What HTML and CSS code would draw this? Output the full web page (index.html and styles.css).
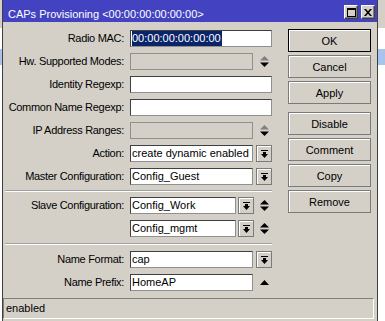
FILE: index.html
```html
<!DOCTYPE html>
<html>
<head>
<meta charset="utf-8">
<link rel="stylesheet" href="styles.css">
</head>
<body>
<div class="window">
  <div class="titlebar">
    <span class="title">CAPs Provisioning &lt;00:00:00:00:00:00&gt;</span>
    <div class="tbtns">
      <span class="tbtn"><svg width="9" height="9" viewBox="0 0 9 9"><path d="M0 0h9v9h-9z M1 2v6h7v-6z" fill="#000" fill-rule="evenodd"/></svg></span>
      <span class="tbtn"><svg width="8" height="7" viewBox="0 0 8 7"><path d="M0 0h2l2 2.2l2-2.2h2l-3 3.5l3 3.5h-2l-2-2.2l-2 2.2h-2l3-3.5z" fill="#000"/></svg></span>
    </div>
  </div>
  <div class="content">
    <div class="form">
      <div class="row"><span class="lbl">Radio MAC:</span><div class="field"><span class="inp w142"><span class="sel">00:00:00:00:00:00</span></span></div></div>
      <div class="row"><span class="lbl">Hw. Supported Modes:</span><div class="field"><span class="inp w123 dis"></span><svg class="spin" width="9" height="11" viewBox="0 0 9 11"><path d="M0 4.5L4.5 0L9 4.5z" fill="#808080"/><path d="M0 6.5L4.5 11L9 6.5z" fill="#000"/></svg></div></div>
      <div class="row"><span class="lbl">Identity Regexp:</span><div class="field"><span class="inp w142"></span></div></div>
      <div class="row"><span class="lbl">Common Name Regexp:</span><div class="field"><span class="inp w142"></span></div></div>
      <div class="row"><span class="lbl">IP Address Ranges:</span><div class="field"><span class="inp w123 dis"></span><svg class="spin" width="9" height="11" viewBox="0 0 9 11"><path d="M0 4.5L4.5 0L9 4.5z" fill="#808080"/><path d="M0 6.5L4.5 11L9 6.5z" fill="#000"/></svg></div></div>
      <div class="row"><span class="lbl">Action:</span><div class="field"><span class="inp w123">create dynamic enabled</span><span class="dd"><svg width="7" height="8" viewBox="0 0 7 8"><path d="M0 0h7v1h-7z M2 2h3v2h2l-3.5 4l-3.5-4h2z" fill="#000"/></svg></span></div></div>
      <div class="row"><span class="lbl">Master Configuration:</span><div class="field"><span class="inp w123">Config_Guest</span><span class="dd"><svg width="7" height="8" viewBox="0 0 7 8"><path d="M0 0h7v1h-7z M2 2h3v2h2l-3.5 4l-3.5-4h2z" fill="#000"/></svg></span></div></div>
      <div class="sep"></div>
      <div class="row"><span class="lbl">Slave Configuration:</span><div class="field"><span class="inp w106">Config_Work</span><span class="dd dd-s"><svg width="7" height="8" viewBox="0 0 7 8"><path d="M0 0h7v1h-7z M2 2h3v2h2l-3.5 4l-3.5-4h2z" fill="#000"/></svg></span><svg class="spin spin-s" width="9" height="11" viewBox="0 0 9 11"><path d="M0 4.5L4.5 0L9 4.5z" fill="#000"/><path d="M0 6.5L4.5 11L9 6.5z" fill="#000"/></svg></div></div>
      <div class="row"><span class="lbl"></span><div class="field"><span class="inp w106">Config_mgmt</span><span class="dd dd-s"><svg width="7" height="8" viewBox="0 0 7 8"><path d="M0 0h7v1h-7z M2 2h3v2h2l-3.5 4l-3.5-4h2z" fill="#000"/></svg></span><svg class="spin spin-s" width="9" height="11" viewBox="0 0 9 11"><path d="M0 4.5L4.5 0L9 4.5z" fill="#000"/><path d="M0 6.5L4.5 11L9 6.5z" fill="#000"/></svg></div></div>
      <div class="sep sep2"></div>
      <div class="row"><span class="lbl">Name Format:</span><div class="field"><span class="inp w123">cap</span><span class="dd"><svg width="7" height="8" viewBox="0 0 7 8"><path d="M0 0h7v1h-7z M2 2h3v2h2l-3.5 4l-3.5-4h2z" fill="#000"/></svg></span></div></div>
      <div class="row"><span class="lbl">Name Prefix:</span><div class="field"><span class="inp w123">HomeAP</span><svg class="spin up" width="9" height="5" viewBox="0 0 9 5"><path d="M0 5L4.5 0L9 5z" fill="#000"/></svg></div></div>
    </div>
    <div class="buttons">
      <span class="btn default">OK</span>
      <span class="btn">Cancel</span>
      <span class="btn">Apply</span>
      <span class="btn group">Disable</span>
      <span class="btn">Comment</span>
      <span class="btn">Copy</span>
      <span class="btn">Remove</span>
    </div>
  </div>
  <div class="status">enabled</div>
</div>
</body>
</html>
```

FILE: styles.css
```css
html, body {
  margin: 0;
  padding: 0;
}
body {
  width: 385px;
  height: 321px;
  overflow: hidden;
  font-family: "Liberation Sans", Arial, sans-serif;
  font-size: 11px;
  color: #000;
  background: linear-gradient(to bottom, #d4d0c8 0, #d4d0c8 28px, #ffffff 28px, #ffffff 49px, #a8c4ec 49px, #a8c4ec 65px, #ffffff 65px);
}
.window {
  margin-left: 2px;
  width: 374px;
  height: 321px;
  border-left: 1px solid #404040;
  border-right: 1px solid #404040;
  background: #d4d0c8;
  display: flex;
  flex-direction: column;
}
.titlebar {
  height: 22px;
  flex: none;
  background: #4343c2;
  color: #fff;
  display: flex;
  align-items: flex-start;
  padding: 0 2px 0 5px;
}
.title {
  padding-top: 8px;
  line-height: 13px;
  white-space: nowrap;
}
.tbtns {
  margin-left: auto;
  margin-top: 5px;
  display: flex;
  gap: 3px;
}
.tbtn {
  width: 14px;
  height: 14px;
  box-sizing: border-box;
  background: #d4d0c8;
  border: 1px solid;
  border-color: #fff #404040 #404040 #fff;
  box-shadow: inset -1px -1px 0 #808080;
  display: flex;
  align-items: center;
  justify-content: center;
}
.content {
  display: flex;
  flex: none;
  padding-top: 8px;
}
.form {
  width: 285px;
  display: flex;
  flex-direction: column;
  gap: 6px;
}
.row {
  display: grid;
  grid-template-columns: 121px auto;
  column-gap: 6px;
  height: 17px;
}
.lbl {
  text-align: right;
  line-height: 17px;
  white-space: nowrap;
  letter-spacing: -0.3px;
}
.field {
  display: flex;
  align-items: center;
}
.inp {
  height: 17px;
  box-sizing: border-box;
  background: #fff;
  border: 1px solid;
  border-color: #404040 #909090 #909090 #404040;
  padding: 0 0 0 1px;
  line-height: 15px;
  white-space: nowrap;
  overflow: hidden;
}
.inp.dis {
  background: #d4d0c8;
  border-color: #909090;
}
.w142 { width: 142px; }
.w123 { width: 123px; }
.w106 { width: 106px; }
.sel {
  display: inline-block;
  background: #0a246a;
  color: #fff;
  padding: 0 1px 0 0;
}
.dd {
  width: 16px;
  height: 17px;
  box-sizing: border-box;
  margin-left: 3px;
  background: #d4d0c8;
  border: 1px solid #7a7a7a;
  box-shadow: inset 1px 1px 0 #fff;
  display: flex;
  align-items: center;
  justify-content: center;
}
.dd-s { margin-left: 2px; }
.spin { margin-left: 7px; }
.spin-s { margin-left: 6px; }
.spin.up { margin-top: 0; }
.sep {
  height: 0;
  margin: -1px 0 -1px 2px;
  width: 267px;
  border-top: 1px solid #a0a0a0;
  border-bottom: 1px solid #fff;
}
.sep2 {
  margin-top: 0;
  margin-bottom: 0;
}
.buttons {
  width: 83px;
  margin-top: -1px;
  display: flex;
  flex-direction: column;
  gap: 3px;
}
.btn {
  height: 23px;
  box-sizing: border-box;
  border: 1px solid #7a7a7a;
  box-shadow: inset 1px 1px 0 #fff;
  display: flex;
  align-items: center;
  justify-content: center;
  background: #d4d0c8;
}
.btn.default {
  border-color: #000;
}
.btn.group {
  margin-top: 5px;
}
.status {
  margin: 7px 3px 0 0;
  height: 21px;
  box-sizing: border-box;
  border: 1px solid;
  border-color: #808080 #fff #fff #808080;
  padding-left: 2px;
  line-height: 19px;
}
```
